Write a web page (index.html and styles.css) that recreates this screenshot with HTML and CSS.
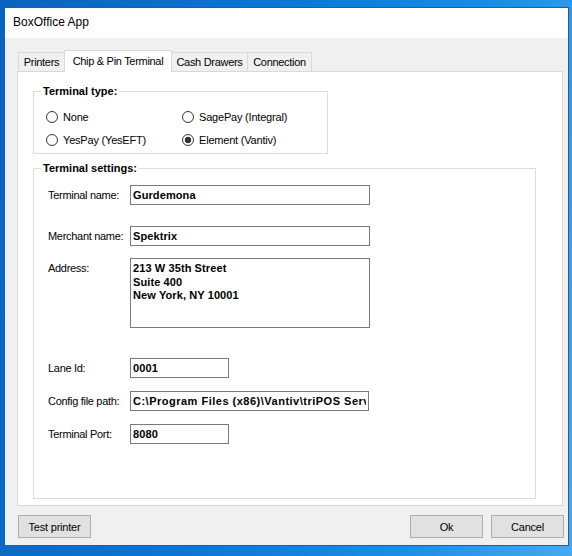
FILE: index.html
```html
<!DOCTYPE html>
<html lang="en">
<head>
<meta charset="UTF-8">
<title>BoxOffice App</title>
<link rel="stylesheet" href="styles.css">
</head>
<body>
	<div class="window">
		<div class="title-bar">BoxOffice App</div>
		<div class="client">
			<div class="tabs">
				<div class="tab tab-printers">Printers</div>
				<div class="tab tab-chip active">Chip &amp; Pin Terminal</div>
				<div class="tab tab-cash">Cash Drawers</div>
				<div class="tab tab-conn">Connection</div>
			</div>
			<div class="tab-page">
				<fieldset class="group group-type">
					<legend>Terminal type:</legend>
					<div class="radio-grid">
						<label class="radio"><input type="radio" name="terminal"> None</label>
						<label class="radio"><input type="radio" name="terminal"> SagePay (Integral)</label>
						<label class="radio"><input type="radio" name="terminal"> YesPay (YesEFT)</label>
						<label class="radio"><input type="radio" name="terminal" checked> Element (Vantiv)</label>
					</div>
				</fieldset>
				<fieldset class="group group-settings">
					<legend>Terminal settings:</legend>
					<div class="field-row row-name">
						<label class="field-label">Terminal name:</label>
						<input class="text-box" type="text" value="Gurdemona">
					</div>
					<div class="field-row row-merchant">
						<label class="field-label">Merchant name:</label>
						<input class="text-box" type="text" value="Spektrix">
					</div>
					<div class="field-row row-address">
						<label class="field-label">Address:</label>
						<textarea class="text-box text-area">213 W 35th Street
Suite 400
New York, NY 10001</textarea>
					</div>
					<div class="field-row row-lane">
						<label class="field-label">Lane Id:</label>
						<input class="text-box short" type="text" value="0001">
					</div>
					<div class="field-row row-config">
						<label class="field-label">Config file path:</label>
						<input class="text-box config" type="text" value="C:\Program Files (x86)\Vantiv\triPOS Service\triPOS.exe.config">
					</div>
					<div class="field-row row-port">
						<label class="field-label">Terminal Port:</label>
						<input class="text-box short" type="text" value="8080">
					</div>
				</fieldset>
			</div>
			<div class="button-bar">
				<button class="btn">Test printer</button>
				<div class="button-group">
					<button class="btn">Ok</button>
					<button class="btn">Cancel</button>
				</div>
			</div>
		</div>
	</div>
</body>
</html>
```

FILE: styles.css
```css
html, body {
	margin: 0;
	width: 572px;
	height: 556px;
	overflow: hidden;
}

body {
	box-sizing: border-box;
	padding: 7px 0 0 4px;
	background: linear-gradient(100deg, #0a63bd 0%, #0b78d6 45%, #1a8fe6 75%, #45a9f0 100%);
	font-family: "Liberation Sans", Arial, sans-serif;
	color: #000;
}

.window {
	box-sizing: border-box;
	width: 565px;
	height: 539px;
	border: 1px solid #1d5fa6;
	background-color: #f0f0f0;
	display: flex;
	flex-direction: column;
}

.title-bar {
	height: 30px;
	padding: 0 0 2px 8px;
	box-sizing: border-box;
	background-color: #fff;
	font-size: 12px;
	display: flex;
	align-items: center;
}

.client {
	flex: 1;
	padding: 12px 5px 0 12px;
}

/* tab strip */
.tabs {
	display: flex;
	align-items: flex-end;
	height: 21px;
	padding-left: 1px;
}

.tab {
	position: relative;
	box-sizing: border-box;
	height: 19px;
	margin-right: -1px;
	padding-top: 2px;
	border: 1px solid #d9d9d9;
	border-bottom: none;
	background-color: #f0f0f0;
	font-size: 11px;
	line-height: 15px;
	letter-spacing: -0.3px;
	text-align: center;
	white-space: nowrap;
}

.tab-printers { width: 47px; }
.tab-chip { width: 108px; }
.tab-cash { width: 77px; }
.tab-conn { width: 65px; }

.tab.active {
	z-index: 1;
	height: 22px;
	margin-bottom: -1px;
	padding-top: 3px;
	background-color: #fff;
}

.tab-page {
	box-sizing: border-box;
	height: 435px;
	border: 1px solid #d9d9d9;
	background-color: #fff;
	padding-top: 13px;
}

/* group boxes */
.group {
	box-sizing: border-box;
	margin: 0 0 0 15px;
	padding: 0 0 0 7px;
	border: 1px solid #dcdcdc;
	min-inline-size: 0;
}

.group legend {
	padding: 0 2px;
	font-size: 11px;
	font-weight: bold;
	line-height: 13px;
}

.group-type {
	width: 295px;
	padding-top: 11px;
	padding-bottom: 5px;
}

.radio-grid {
	display: grid;
	grid-template-columns: 136px auto;
	row-gap: 7px;
	margin-left: 5px;
}

.radio {
	display: flex;
	align-items: center;
	gap: 5px;
	height: 16px;
	font-size: 11px;
	letter-spacing: -0.2px;
}

.radio input {
	appearance: none;
	-webkit-appearance: none;
	box-sizing: border-box;
	width: 12px;
	height: 12px;
	margin: 0;
	border: 1px solid #333;
	border-radius: 50%;
	background-color: #fff;
}

.radio input:checked {
	background: radial-gradient(circle, #333 0 3px, #fff 3.6px);
}

.group-settings {
	width: 503px;
	margin-top: 8px;
	padding-top: 10px;
	padding-bottom: 54px;
}

/* settings rows */
.field-row {
	display: flex;
	align-items: center;
	margin-left: 7px;
}

.row-merchant { margin-top: 21px; }
.row-address { margin-top: 12px; align-items: flex-start; }
.row-lane { margin-top: 30px; }
.row-config { margin-top: 13px; }
.row-port { margin-top: 13px; }

.field-label {
	width: 82px;
	flex: none;
	font-size: 11px;
	letter-spacing: -0.3px;
	white-space: nowrap;
}

.row-address .field-label {
	padding-top: 4px;
	line-height: 13px;
}

.text-box {
	box-sizing: border-box;
	width: 240px;
	height: 20px;
	margin: 0;
	padding: 0 2px;
	border: 1px solid #7a7a7a;
	border-radius: 0;
	background-color: #fff;
	font-family: "Liberation Sans", Arial, sans-serif;
	font-size: 11px;
	font-weight: bold;
	letter-spacing: 0.1px;
	color: #000;
	outline: none;
}

.text-box.config {
	width: 239px;
	letter-spacing: 0.5px;
}

.text-box.short {
	width: 99px;
}

.text-area {
	height: 70px;
	padding: 3px 2px;
	line-height: 13.5px;
	resize: none;
	overflow: hidden;
}

/* bottom buttons */
.button-bar {
	display: flex;
	justify-content: space-between;
	padding: 9px 0 0 1px;
	margin-right: -1px;
}

.button-group {
	display: flex;
	gap: 8px;
}

.btn {
	box-sizing: border-box;
	width: 73px;
	height: 23px;
	margin: 0;
	padding: 0;
	border: 1px solid #adadad;
	border-radius: 0;
	background-color: #e1e1e1;
	font-family: "Liberation Sans", Arial, sans-serif;
	font-size: 11px;
	letter-spacing: -0.2px;
	color: #000;
}
```
